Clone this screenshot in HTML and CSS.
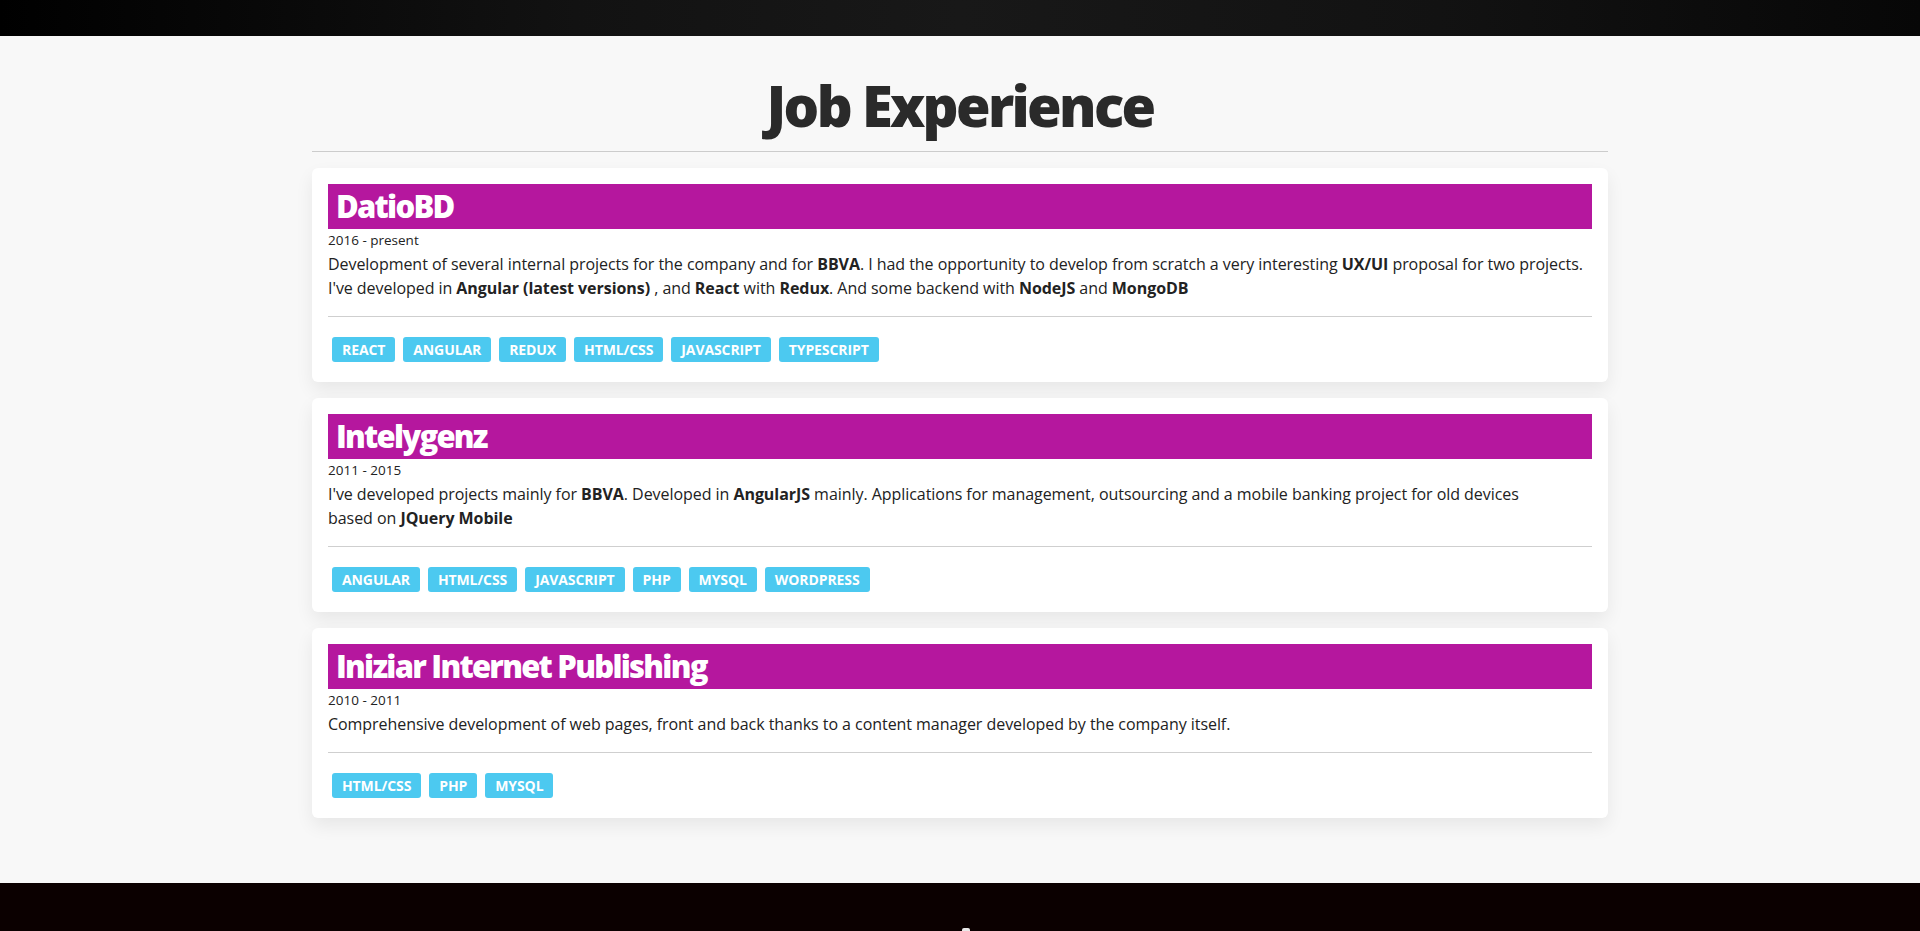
FILE: index.html
```html
<!DOCTYPE html>
<html lang="en">
<head>
<meta charset="utf-8">
<title>Job Experience</title>
<link rel="stylesheet" href="styles.css">
</head>
<body>
<header class="topbar"></header>
<main class="section">
  <div class="container">
    <h1 class="section-title">Job Experience</h1>
    <hr class="title-rule">
    <div class="jobs">
      <article class="job-card">
        <h2 class="job-company">DatioBD</h2>
        <div class="job-dates">2016 - present</div>
        <p class="job-desc">Development of several internal projects for the company and for <b>BBVA</b>. I had the opportunity to develop from scratch a very interesting <b>UX/UI</b> proposal for two projects. I've developed in <b>Angular (latest versions)</b> , and <b>React</b> with <b>Redux</b>. And some backend with <b>NodeJS</b> and <b>MongoDB</b></p>
        <hr class="job-rule">
        <div class="tags">
          <span class="tag">React</span>
          <span class="tag">Angular</span>
          <span class="tag">Redux</span>
          <span class="tag">HTML/CSS</span>
          <span class="tag">Javascript</span>
          <span class="tag">Typescript</span>
        </div>
      </article>
      <article class="job-card">
        <h2 class="job-company">Intelygenz</h2>
        <div class="job-dates">2011 - 2015</div>
        <p class="job-desc">I've developed projects mainly for <b>BBVA</b>. Developed in <b>AngularJS</b> mainly. Applications for management, outsourcing and a mobile banking project for old devices <span class="nowrap">based on <b>JQuery Mobile</b></span></p>
        <hr class="job-rule">
        <div class="tags">
          <span class="tag">Angular</span>
          <span class="tag">HTML/CSS</span>
          <span class="tag">Javascript</span>
          <span class="tag">PHP</span>
          <span class="tag">MySQL</span>
          <span class="tag">Wordpress</span>
        </div>
      </article>
      <article class="job-card">
        <h2 class="job-company">Iniziar Internet Publishing</h2>
        <div class="job-dates">2010 - 2011</div>
        <p class="job-desc">Comprehensive development of web pages, front and back thanks to a content manager developed by the company itself.</p>
        <hr class="job-rule">
        <div class="tags">
          <span class="tag">HTML/CSS</span>
          <span class="tag">PHP</span>
          <span class="tag">MySQL</span>
        </div>
      </article>
    </div>
  </div>
</main>
<footer class="footer">
  <span class="footer-mark"></span>
</footer>
</body>
</html>
```

FILE: styles.css
```css
* { box-sizing: border-box; }

html, body {
  margin: 0;
  padding: 0;
}

body {
  background: #f8f8f8;
  color: #212529;
  font-family: "Open Sans", "Liberation Sans", sans-serif;
  font-size: 16px;
  line-height: 24px;
}

.topbar {
  height: 36px;
  background: linear-gradient(90deg, #000000 0%, #121212 30%, #181818 50%, #121212 75%, #070707 100%);
}

.section {
  padding: 0 0 65px;
}

.container {
  width: 1296px;
  margin: 0 auto;
}

.section-title {
  margin: 0;
  padding-top: 36px;
  height: 115px;
  text-align: center;
  font-size: 56px;
  line-height: 67px;
  font-weight: 800;
  letter-spacing: -2.65px;
  color: #2a2a2a;
}

.title-rule {
  margin: 0 0 16px;
  border: 0;
  border-top: 1px solid #cccccc;
}

.jobs {
  display: flex;
  flex-direction: column;
  gap: 16px;
}

.job-card {
  background: #ffffff;
  border-radius: 6px;
  padding: 16px;
  box-shadow: 0 8px 18px rgba(0, 0, 0, 0.07);
}

.job-company {
  margin: 0;
  height: 45px;
  padding: 0 8px;
  background: #b5179e;
  color: #ffffff;
  font-size: 31px;
  line-height: 45px;
  font-weight: 800;
  letter-spacing: -1.75px;
}

.job-dates {
  font-size: 13.5px;
  line-height: 23px;
  color: #222222;
}

.job-desc {
  margin: 0 0 16px;
  color: #222222;
  letter-spacing: -0.05px;
}

.job-desc b {
  font-weight: 700;
}

.nowrap {
  white-space: nowrap;
}

.job-rule {
  margin: 0 0 16px;
  border: 0;
  border-top: 1px solid #cfcfcf;
}

.tags {
  display: flex;
  flex-wrap: wrap;
}

.tag {
  margin: 4px;
  height: 25px;
  padding: 0 10px;
  border-radius: 3px;
  background: #4cc9f0;
  color: #ffffff;
  font-size: 14px;
  line-height: 25px;
  font-weight: 700;
  text-transform: uppercase;
  letter-spacing: -0.1px;
}

.footer {
  height: 48px;
  background: #0b0000;
  display: flex;
  justify-content: center;
  padding-top: 45px;
}

.footer-mark {
  display: block;
  width: 8px;
  height: 8px;
  margin-left: 12px;
  border-radius: 2px;
  background: #e8e8e8;
}
```
